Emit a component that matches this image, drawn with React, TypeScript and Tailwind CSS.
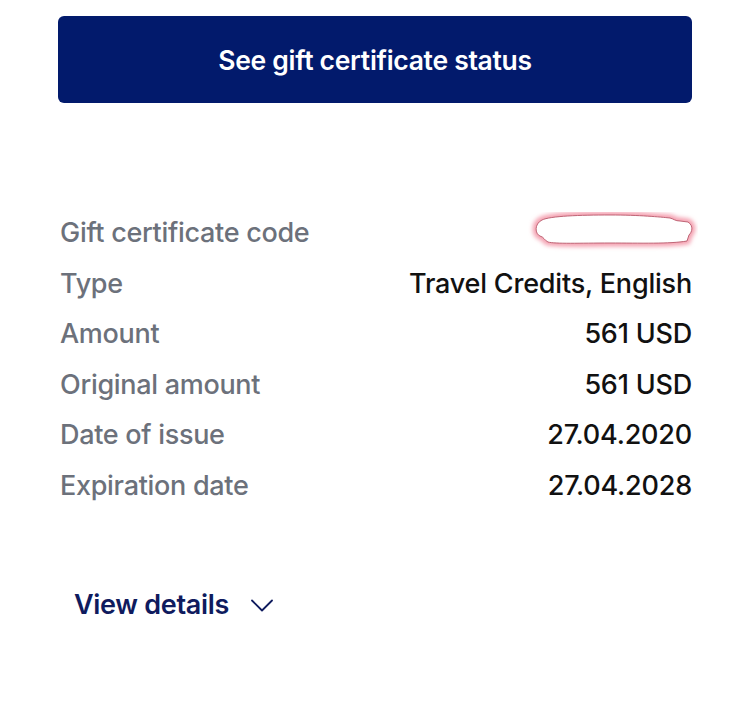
const rows = [
  { label: 'Type', value: 'Travel Credits, English' },
  { label: 'Amount', value: '561 USD' },
  { label: 'Original amount', value: '561 USD' },
  { label: 'Date of issue', value: '27.04.2020' },
  { label: 'Expiration date', value: '27.04.2028' },
];

const blob =
  'M14 8 C22 4 52 3 82 3 C112 3 132 5 142 6 C146 7 147 9 152 9 L160 10 C166 14 164 20 161 23 L159 29 C142 32 112 31 82 31 C52 31 27 32 20 30 C16 28 16 25 12 24 C7 22 6 12 14 8 Z';

function Redacted() {
  return (
    <svg width="170" height="42" viewBox="0 0 170 42" className="-mr-[6px] shrink-0">
      <defs>
        <filter id="glow" x="-20%" y="-50%" width="140%" height="200%">
          <feGaussianBlur stdDeviation="2" />
        </filter>
      </defs>
      <path d={blob} fill="none" stroke="#f4a0b0" strokeWidth="7" filter="url(#glow)" />
      <path d={blob} fill="#ffffff" stroke="#b8586a" strokeWidth="0.9" />
    </svg>
  );
}

export default function App() {
  return (
    <div
      className="w-[750px] h-[717px] bg-white px-[58px] pt-[16px]"
      style={{ fontFamily: 'Inter, "Noto Sans", sans-serif' }}
    >
      <button className="w-full h-[87px] pt-[3px] rounded-[6px] bg-[#021a6c] text-white text-[26.5px] font-semibold tracking-[-0.3px]">
        See gift certificate status
      </button>

      <div className="mt-[105px] pl-[2px]">
        <div className="flex items-center justify-between h-[50.6px]">
          <span className="text-[27px] font-medium text-[#6c717b] tracking-[-0.3px]">
            Gift certificate code
          </span>
          <Redacted />
        </div>
        {rows.map((r) => (
          <div key={r.label} className="flex items-center justify-between h-[50.6px]">
            <span className="text-[27px] font-medium text-[#6c717b] tracking-[-0.3px]">{r.label}</span>
            <span className="text-[27px] font-medium text-[#111111] tracking-[-0.2px]">{r.value}</span>
          </div>
        ))}
      </div>

      <div className="mt-[73px] pl-[16px] flex items-center gap-[22px] text-[#0f1b5e]">
        <span className="text-[27px] font-semibold tracking-[-0.3px]">View details</span>
        <svg width="22" height="13" viewBox="0 0 22 13" fill="none" className="mt-[2px]">
          <path d="M1 1.5 L11 11.5 L21 1.5" stroke="currentColor" strokeWidth="1.8" strokeLinecap="round" strokeLinejoin="round" />
        </svg>
      </div>
    </div>
  );
}
